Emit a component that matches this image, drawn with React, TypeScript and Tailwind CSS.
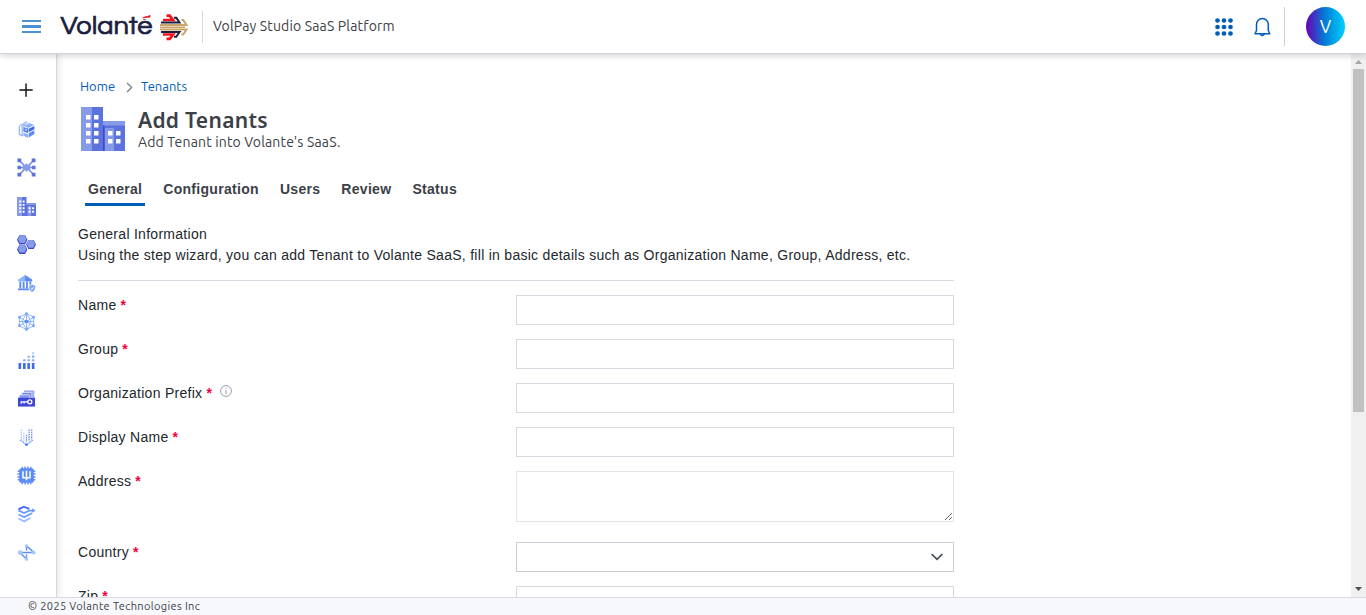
import type { ReactNode } from "react";

const humanist = "font-['Ubuntu','Noto_Sans',sans-serif]";

function Icon({ children, size = 19 }: { children: ReactNode; size?: number }) {
  return (
    <svg width={size} height={size} viewBox="0 0 20 20" fill="none" aria-hidden="true">
      {children}
    </svg>
  );
}

function Buildings({ size }: { size: number }) {
  return (
    <svg width={size} height={size} viewBox="0 0 44 44" aria-hidden="true">
      <path fill="#869be8" d="M0 0h11v44H0z" />
      <path fill="#5c72dc" d="M11 0h11v44H11z" />
      <path fill="#5c72dc" d="M22 14h22v30H22z" />
      <path fill="#869be8" d="M22 14h22v4.500H22zM24 21h9v23h-9z" />
      <path fill="#3f49cf" d="M22 18.500h1.500V44H22z" />
      <path
        fill="#fff"
        d="M5 8h4.500v4.500H5zM13 8h4.500v4.500H13zM5 16h4.500v4.500H5zM13 16h4.500v4.500H13zM5 24h4.500v4.500H5zM13 24h4.500v4.500H13zM5 32h4.500v4.500H5zM13 32h4.500v4.500H13zM27 24h4.500v4.500H27zM35 24h4.500v4.500H35zM27 32h4.500v4.500H27zM35 32h4.500v4.500H35z"
      />
    </svg>
  );
}

const barCentres = [3, 7.7, 12.3, 17];

const navIcons: { name: string; icon: ReactNode }[] = [
  {
    name: "Add",
    icon: (
      <Icon>
        <path d="M9.500 2.500v14M2.500 9.500h14" stroke="#111" strokeWidth="1.500" />
      </Icon>
    ),
  },
  {
    name: "Packages",
    icon: (
      <Icon>
        <path d="M2.500 6v9l3 1.500V6.800L9 4.600" stroke="#8fb1fb" strokeWidth="1.300" />
        <path d="M2 5.400 9.800 1.200l2.400 1.200L5 6.500z" fill="#a9c6ff" />
        <path d="m7 6.300 6-3.200 5 2.200-6 3.200z" fill="#8db2fc" />
        <path d="M6.700 7.300 11.700 9v4.700L6.700 12z" fill="#4c78ee" />
        <path d="m12.300 9.300 6-3v3.500l-6 3z" fill="#3d6bea" />
        <path d="m12.300 14 6-3.200v4l-6 3.700z" fill="#5d8af4" />
        <path d="m6.700 13.300 5 1.700v4l-5-2.500z" fill="#8fb1fb" />
        <circle cx="9.300" cy="10.300" r="1.300" fill="#a9c6ff" />
      </Icon>
    ),
  },
  {
    name: "Network",
    icon: (
      <Icon>
        <path d="m2 2 5 5 2 3M18 2l-5 5-2 3M2 18l5-5 2-3M18 18l-5-5-2-3M2 10h16" stroke="#6f86e2" strokeWidth="1.500" />
        <path d="M6 7.500h8v5H6z" fill="#869be8" />
        <path d="M10 5.500 14.500 10 10 14.500 5.500 10z" fill="#869be8" />
        <path
          d="M.500.500h4v4h-4zM15.500.5h4v4h-4zM.5 15.500h4v4h-4zM15.500 15.500h4v4h-4zM.5 8.200h3.600v3.600H.5zM15.900 8.200h3.600v3.600h-3.600z"
          fill="#5c72dc"
        />
      </Icon>
    ),
  },
  { name: "Tenants", icon: <Buildings size={19} /> },
  {
    name: "Clusters",
    icon: (
      <Icon>
        <path d="M2.500.300h6l2.500 4.700-2.500 4.900h-6L0 5zM12 5.300h5.600l2.400 4.700-2.400 4.700H12L9.500 10zM2.500 10.500h6L11 15.200 8.500 20h-6L0 15.200z" fill="#4048d0" />
        <path d="M3 .300h5l2 4.200-2 3.900H3L1.100 4.500zM12.300 5.300h4.800l2 4.300-2 3.700h-4.800l-2-3.700zM3 10.500h5l2 4.200-2 3.700H3l-1.900-3.700z" fill="#869be8" />
      </Icon>
    ),
  },
  {
    name: "Bank",
    icon: (
      <Icon>
        <path d="M1 6 8.500 1 16 6v1.700H1z" fill="#8fb4fb" />
        <path d="m8.500 1 7.500 5v1.700H8.500z" fill="#5c8af3" />
        <path d="M2.500 8h2v7h-2zM6 8h2v7H6zM9.500 8h2v7h-2zM13 8h2v3h-2zM1 15.300h11.500V17H1z" fill="#5c8af3" />
        <path d="M16 11c1 .7 2 1 3.300 1 0 3.300-.6 5.500-3.300 7-2.700-1.500-3.300-3.700-3.300-7 1.300 0 2.300-.3 3.300-1z" fill="#7ea8f9" />
        <path d="m14.500 15 1.200 1.200 2-2.300" stroke="#fff" />
      </Icon>
    ),
  },
  {
    name: "Mesh",
    icon: (
      <Icon>
        <path
          d="m10 1.500 7.500 4v9L10 18.500l-7.500-4v-9zM10 1.500v17M2.500 5.500l15 9M17.500 5.500l-15 9M2.500 10h15M10 1.500l-5 8.500 5 8.500 5-8.500z"
          stroke="#8bb2fa"
          strokeWidth="1"
        />
        <g fill="#79a3f8">
          <circle cx="10" cy="1.700" r="1.500" />
          <circle cx="17.400" cy="5.500" r="1.500" />
          <circle cx="17.400" cy="14.500" r="1.500" />
          <circle cx="10" cy="18.300" r="1.500" />
          <circle cx="2.600" cy="14.500" r="1.500" />
          <circle cx="2.600" cy="5.500" r="1.500" />
        </g>
        <circle cx="10" cy="10" r="1.900" fill="#5c8af3" />
      </Icon>
    ),
  },
  {
    name: "Metrics",
    icon: (
      <Icon>
        <g fill="#416bea">
          {barCentres.map((x) => (
            <rect key={x} x={x - 1.4} y="12.500" width="2.800" height="6.500" rx=".6" />
          ))}
        </g>
        <g fill="#8fb1fb">
          <circle cx="7.700" cy="9.700" r="1.300" />
          <circle cx="12.300" cy="9.700" r="1.300" />
          <circle cx="12.300" cy="6" r="1.300" />
          <circle cx="17" cy="9.700" r="1.400" />
          <circle cx="17" cy="6" r="1.400" />
        </g>
        <circle cx="17" cy="2.300" r="1.400" fill="#c3d6ff" />
      </Icon>
    ),
  },
  {
    name: "Keys",
    icon: (
      <Icon>
        <path d="M7.500 1.500h10.700v7H7.500z" fill="#9aace9" />
        <path d="M5 3.700h10.500v5H5z" fill="#7387e0" stroke="#fff" strokeWidth=".6" />
        <path d="M2.500 6H13v3.500H2.500z" fill="#869be8" stroke="#fff" strokeWidth=".6" />
        <path d="M1 9h18v9.500H1z" fill="#3d46d6" />
        <circle cx="13.500" cy="13.500" r="2.100" stroke="#fff" strokeWidth="1.400" />
        <path d="M11.500 13.500h-7v2M7.500 13.500v1.800" stroke="#fff" strokeWidth="1.400" />
      </Icon>
    ),
  },
  {
    name: "Streams",
    icon: (
      <Icon>
        <path d="M4.500 1.500v11M7.200 5v9.500" stroke="#a9c6ff" strokeWidth="1.200" strokeDasharray="1.700 .7" />
        <path d="M10 7v8M12.700 1.500v12.500M15.500 1.500v10.500" stroke="#5f82e9" strokeWidth="1.200" strokeDasharray="1.700 .7" />
        <path d="m3 12.500 7 5.200 7-5.200" stroke="#7fa4f6" strokeWidth="1.200" strokeDasharray="2.500 .5" />
        <circle cx="10" cy="17.700" r="1.300" fill="#416bea" />
      </Icon>
    ),
  },
  {
    name: "Chip",
    icon: (
      <Icon>
        <path
          d="M5.500 .8v18.400M8.500.5v19M11.500.5v19M14.500 .8v18.400M.8 5.500h18.400M.5 8.500h19M.5 11.500h19M.8 14.500h18.400"
          stroke="#5c8df6"
          strokeWidth="1.500"
        />
        <rect x="2.300" y="2.300" width="15.400" height="15.400" rx="2" fill="#5c8df6" />
        <path d="M6.300 5.500v6.800h7.400V5.500M10 5v10" stroke="#fff" strokeWidth="1.600" />
      </Icon>
    ),
  },
  {
    name: "Layers",
    icon: (
      <Icon>
        <path d="m1.500 4.700 5.700-2.900L13 4" stroke="#416bea" strokeWidth="2" />
        <path d="m1.500 5.700 5.800 2.800L13 6h5" stroke="#6b97f7" strokeWidth="1.900" />
        <path d="m16 3.400 3.500 2.400-3.500 2.300z" fill="#6b97f7" />
        <path d="m1.500 10 6 2.800 8.500-4.300" stroke="#79a3f8" strokeWidth="2" />
        <path d="m1.500 14.200 6 3.100 6.500-3.600" stroke="#9abdfc" strokeWidth="2" />
      </Icon>
    ),
  },
  {
    name: "Flow",
    icon: (
      <Icon>
        <path d="M3 10h15L10 3v5M3 10l7 7v-5" stroke="#5c8df6" strokeWidth="1.500" />
        <g fill="#a9c6ff">
          <circle cx="3.200" cy="10" r="2.400" />
          <circle cx="17.300" cy="10" r="2.100" />
          <circle cx="10" cy="3" r="1.700" />
          <circle cx="10" cy="17" r="1.700" />
        </g>
      </Icon>
    ),
  },
];

function EmblemHalf() {
  return (
    <g fill="none">
      <path d="M107.500 4.700h3.200l3.300 4.300H104" stroke="#f5141c" strokeWidth="2.700" />
      <path d="M115 6.700h2.300l3.200 4.800H102" stroke="#1b1f3f" strokeWidth="2" />
      <path d="M122.500 9h1.700l3.300 5H101" stroke="#cba56b" strokeWidth="2" />
    </g>
  );
}

function Logo() {
  return (
    <svg className="ml-[18px] shrink-0" width="130" height="32" viewBox="0 0 130 32" aria-label="Volanté">
      <text
        x="1.500"
        y="23"
        textLength="92"
        lengthAdjust="spacingAndGlyphs"
        fill="#1b1f3f"
        stroke="#1b1f3f"
        strokeWidth=".7"
        className="font-['Century_Gothic','URW_Gothic','Questrial','Nunito','Lato',sans-serif] text-[26px] font-semibold"
      >
        Volanté
      </text>
      <path d="M82.500 0h12v8.200h-12z" fill="#fff" />
      <path d="m83.500 6.200 8.200-2.300-.5 2.700-7.500.6z" fill="#ef1c24" />
      <EmblemHalf />
      <path d="M101 16.300h25" stroke="#cba56b" strokeWidth="1.600" />
      <g transform="translate(0 32.500) scale(1 -1)">
        <EmblemHalf />
      </g>
    </svg>
  );
}

function Header() {
  return (
    <header className="relative z-10 flex h-[54px] shrink-0 items-center border-b border-[#cfd2da] bg-white pl-[22px] pr-[21px] shadow-[0_2px_6px_rgba(0,0,0,0.16)]">
      <button aria-label="Menu" className="flex w-[19px] flex-col gap-[3px]">
        <span className="h-[2.500px] bg-[#4e91d0]" />
        <span className="h-[2.500px] bg-[#4e91d0]" />
        <span className="h-[2.500px] bg-[#4e91d0]" />
      </button>
      <Logo />
      <div className="ml-[13px] h-8 w-px bg-[#d5d8de]" />
      <span className={`${humanist} ml-[10px] text-[14px] tracking-[0.16px] text-[#3c4147]`}>VolPay Studio SaaS Platform</span>
      <div className="flex-1" />
      <svg width="18" height="18" viewBox="0 0 18 18" fill="#005eb8" aria-label="Apps">
        {[2.5, 9, 15.5].map((y) => [2.5, 9, 15.5].map((x) => <circle key={`${x}-${y}`} cx={x} cy={y} r="2.350" />))}
      </svg>
      <svg className="ml-5" width="18" height="20" viewBox="0 0 18 20" fill="none" stroke="#005eb8" strokeWidth="1.500" aria-label="Notifications">
        <path d="M3.500 13.500V7.500a5.900 5.900 0 0 1 11.800 0v6l1.500 3.200H2z" strokeLinejoin="round" />
        <path d="M7.300 17a2.100 2.100 0 0 0 4 0" />
      </svg>
      <div className="ml-[13px] h-[39px] w-px bg-[#cbd0da]" />
      <div
        className={`${humanist} ml-[21px] flex size-[39px] items-center justify-center rounded-full bg-[linear-gradient(90deg,#6a00b5_0%,#0080d8_50%,#00d0ff_100%)] pb-px text-[18px] text-white`}
      >
        V
      </div>
    </header>
  );
}

function Label({ text, info }: { text: string; info?: boolean }) {
  return (
    <label className="flex w-[438px] items-start leading-[21px]">
      {text}
      <b className="ml-1 text-[#f5003d]">*</b>
      {info && (
        <svg className="ml-2 mt-[2px]" width="12" height="12" viewBox="0 0 12 12" fill="none" stroke="#9a9fae" aria-label="Info">
          <circle cx="6" cy="6" r="5.400" />
          <path d="M6 5v4.200M6 2.800v1.200" />
        </svg>
      )}
    </label>
  );
}

function Field({ text, info }: { text: string; info?: boolean }) {
  return (
    <div className="flex h-[44px] items-start">
      <Label text={text} info={info} />
      <input aria-label={text} className="h-[30px] w-[438px] border border-[#d6d9df] bg-white px-2 outline-none" />
    </div>
  );
}

function Scrollbar() {
  return (
    <div className="flex w-[15px] shrink-0 flex-col items-center bg-[#f0f0f0]">
      <div className="flex h-[15px] items-center">
        <svg width="7" height="4" viewBox="0 0 7 4" fill="#a3a3a3">
          <path d="M0 4 3.500 0 7 4z" />
        </svg>
      </div>
      <div className="h-[343px] w-[11px] bg-[#c1c1c1]" />
      <div className="flex-1" />
      <div className="flex h-[17px] items-center">
        <svg width="7" height="4" viewBox="0 0 7 4" fill="#505050">
          <path d="m0 0 3.500 4L7 0z" />
        </svg>
      </div>
    </div>
  );
}

const tabs = ["General", "Configuration", "Users", "Review", "Status"];

export default function App() {
  return (
    <div className="flex h-[615px] w-[1366px] flex-col overflow-hidden bg-white font-['Liberation_Sans',Arial,sans-serif] text-[14px] text-[#23282d]">
      <Header />
      <div className="flex min-h-0 flex-1">
        <nav className="flex w-[57px] shrink-0 flex-col border-r border-[#d5d8de] bg-white pr-[3px] pt-[17px] shadow-[2px_0_6px_rgba(0,0,0,0.10)]">
          {navIcons.map(({ name, icon }) => (
            <a key={name} aria-label={name} className="flex h-[38.500px] shrink-0 items-center justify-center pt-px">
              {icon}
            </a>
          ))}
        </nav>
        <main className="min-w-0 flex-1 overflow-hidden pl-[21px]">
          <div className={`${humanist} mt-[22px] flex h-5 items-center pl-[2px] text-[13px] leading-5 text-[#005eb8]`}>
            <a>Home</a>
            <svg className="ml-[11px] mr-[8px] mt-[2px]" width="7" height="11" viewBox="0 0 7 11" fill="none" stroke="#7c828c" strokeWidth="1.300">
              <path d="m1 1 4.700 4.500L1 10" />
            </svg>
            <a>Tenants</a>
          </div>
          <div className="mt-[11px] flex h-[44px] pl-[3px]">
            <Buildings size={44} />
            <div className="ml-[13px] text-[#3c4147]">
              <h1 className="font-['Noto_Sans',sans-serif] text-[21px] font-semibold leading-[26px] tracking-[0.3px]">Add Tenants</h1>
              <p className={`${humanist} text-[14px] leading-[18px] tracking-[0.16px]`}>Add Tenant into Volante's SaaS.</p>
            </div>
          </div>
          <div className="mt-[27px] flex gap-[15px] pl-[7px] font-bold tracking-[0.3px] text-[#3c4147]">
            {tabs.map((tab, i) => (
              <button key={tab} className={`h-[28px] border-b-[3px] px-[3px] pb-[3px] ${i === 0 ? "border-[#005eb8]" : "border-transparent"}`}>
                {tab}
              </button>
            ))}
          </div>
          <section className="w-[876px] tracking-[0.28px]">
            <div className="mt-[18px] border-b border-[#d6d9df] pb-[14px] leading-[21px]">
              <p>General Information</p>
              <p className="whitespace-nowrap">
                Using the step wizard, you can add Tenant to Volante SaaS, fill in basic details such as Organization Name, Group, Address, etc.
              </p>
            </div>
            <div className="pt-[14px]">
              <Field text="Name" />
              <Field text="Group" />
              <Field text="Organization Prefix" info />
              <Field text="Display Name" />
              <div className="flex h-[71px] items-start">
                <Label text="Address" />
                <textarea aria-label="Address" className="block h-[51px] w-[438px] resize-y border border-[#e2e4e8] outline-none" />
              </div>
              <div className="flex h-[44px] items-start">
                <Label text="Country" />
                <div role="combobox" aria-label="Country" className="flex h-[30px] w-[438px] items-center justify-end border border-[#c9ced6] pr-[10px]">
                  <svg width="12" height="8" viewBox="0 0 12 8" fill="none" stroke="#454d54" strokeWidth="1.700">
                    <path d="m.6 1 5.400 5.400L11.400 1" />
                  </svg>
                </div>
              </div>
              <Field text="Zip" />
            </div>
          </section>
        </main>
        <Scrollbar />
      </div>
      <footer
        className={`${humanist} flex h-[18px] shrink-0 items-center border-t border-[#d8dbe1] bg-[#f7f8fb] pl-7 text-[11px] leading-[17px] tracking-[0.35px] text-[#3c4147]`}
      >
        © 2025 Volante Technologies Inc
      </footer>
    </div>
  );
}
